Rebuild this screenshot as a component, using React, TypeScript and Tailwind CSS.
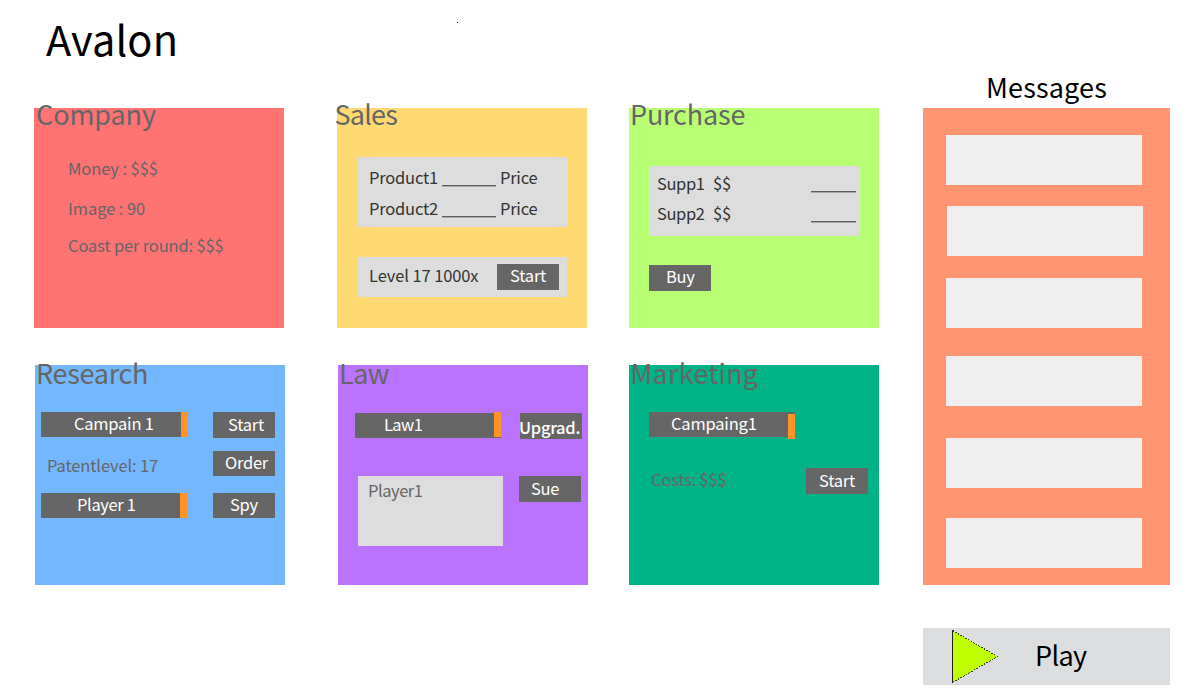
import type { ReactNode } from "react";
import clsx from "clsx";

type BoxProps = { className?: string; children?: ReactNode };

function Panel({ className, children }: BoxProps) {
  return <section className={clsx("flex h-[220px] w-[250px] shrink-0 flex-col items-start", className)}>{children}</section>;
}

function Heading({ className, children }: BoxProps) {
  return <h2 className={clsx("h-8 text-[27px] leading-8 whitespace-nowrap text-[#666666]", className)}>{children}</h2>;
}

function Label({ className, children }: BoxProps) {
  return <span className={clsx("block h-5 shrink-0 whitespace-nowrap", className)}>{children}</span>;
}

function Button({ className, children }: BoxProps) {
  return (
    <button className={clsx("block w-[62px] shrink-0 bg-[#666666] text-left whitespace-nowrap text-white", className)}>
      {children}
    </button>
  );
}

function Picker({ className, thumb, children }: BoxProps & { thumb?: string }) {
  return (
    <div className={clsx("flex h-[25px] shrink-0 justify-between bg-[#666666] text-white", className)}>
      {children}
      <i className={clsx("block h-[25px] w-[7px] bg-[#ff9326]", thumb)} />
    </div>
  );
}

function Blank({ className }: BoxProps) {
  return <i className={clsx("mt-[18px] block h-[2px] border-t border-[#5c5c5c] bg-[#a9a9a9]", className)} />;
}

const messages = ["mt-[27px]", "mt-[21px] ml-px", "mt-[22px]", "mt-[28px]", "mt-[32px]", "mt-[30px]"];

export default function App() {
  return (
    <div className="flex h-[700px] w-[1200px] overflow-hidden bg-white font-['Noto_Sans_CJK_SC',sans-serif] text-[16.5px] leading-5">
      <main className="w-[923px] shrink-0">
        <header className="flex h-[108px] pt-2 pl-[46px]">
          <h1 className="w-[411px] text-[41.5px] leading-[60px] tracking-[0.15px] text-black">Avalon</h1>
          <i className="mt-[14px] block size-px bg-black" />
        </header>

        <div className="flex pl-[34px]">
          <Panel className="bg-[#ff7373] text-[#666666]">
            <Heading className="-mt-[10px] ml-[2px] tracking-[-0.1px]">Company</Heading>
            <Label className="mt-7 ml-[34px] tracking-[-0.08px]">Money : $$$</Label>
            <Label className="mt-5 ml-[34px] tracking-[-0.08px]">Image : 90</Label>
            <Label className="mt-[17px] ml-[34px] tracking-[-0.15px]">Coast per round: $$$</Label>
          </Panel>

          <Panel className="ml-[53px] bg-[#ffda73] text-[#333333]">
            <Heading className="-mt-[10px] -ml-[2.5px] tracking-[-0.8px]">Sales</Heading>
            <div className="mt-[27px] ml-[21px] flex h-[70px] w-[210px] flex-col gap-[11px] bg-[#dddddd] pt-[10px] pl-[10px]">
              {["Product1", "Product2"].map((name) => (
                <div key={name} className="grid h-5 grid-cols-[74px_57px_auto]">
                  <Label className="ml-px tracking-[-0.2px]">{name}</Label>
                  <Blank className="w-[54px]" />
                  <Label className="ml-px tracking-[-0.25px]">Price</Label>
                </div>
              ))}
            </div>
            <div className="mt-[30px] ml-5 flex h-10 w-[210px] bg-[#dddddd] pl-3">
              <Label className="mt-2 w-[128px] tracking-[-0.1px]">Level 17 1000x</Label>
              <Button className="mt-[7px] h-[26px] pb-1 pl-[13px]"><Label className="tracking-[-0.2px]">Start</Label></Button>
            </div>
          </Panel>

          <Panel className="ml-[42px] bg-[#b9ff73] text-[#333333]">
            <Heading className="-mt-[10px] ml-px tracking-[-0.18px]">Purchase</Heading>
            <div className="mt-9 ml-5 flex h-[70px] w-[210px] flex-col gap-[10px] bg-[#dddddd] pt-[7px] pl-2">
              {["Supp1", "Supp2"].map((name) => (
                <div key={name} className="grid h-5 grid-cols-[56px_98px_auto]">
                  <Label className="tracking-[-0.4px]">{name}</Label>
                  <Label className="tracking-[-0.2px]">$$</Label>
                  <Blank className="w-[45px]" />
                </div>
              ))}
            </div>
            <Button className="mt-[29px] ml-5 h-[26px] pb-1 pl-[17px]"><Label className="tracking-[-0.3px]">Buy</Label></Button>
          </Panel>
        </div>

        <div className="mt-[37px] flex pl-[35px]">
          <Panel className="bg-[#73b7ff] text-[#666666]">
            <Heading className="-mt-2 ml-px tracking-[-0.3px]">Research</Heading>
            <div className="mt-[23px] ml-[6px] flex">
              <Picker className="w-[147px] pl-[33px]"><Label className="mt-px tracking-[-0.25px]">Campain 1</Label></Picker>
              <Button className="ml-[25px] h-[26px] pb-1 pl-[15px]"><Label className="mt-px tracking-[-0.25px]">Start</Label></Button>
            </div>
            <div className="mt-[13px] ml-3 flex">
              <Label className="mt-1 w-[166px] tracking-[-0.12px]">Patentlevel: 17</Label>
              <Button className="h-[25px] pb-[3px] pl-3"><Label className="tracking-[-0.27px]">Order</Label></Button>
            </div>
            <div className="mt-[17px] ml-[6px] flex">
              <Picker className="w-[146px] pl-9"><Label className="mt-px tracking-[-0.35px]">Player 1</Label></Picker>
              <Button className="ml-[26px] h-[25px] pb-[3px] pl-[17px]"><Label className="tracking-[-0.3px]">Spy</Label></Button>
            </div>
          </Panel>

          <Panel className="ml-[53px] bg-[#b973ff]">
            <Heading className="-mt-2 ml-px tracking-[-0.5px]">Law</Heading>
            <div className="mt-6 ml-[17px] flex">
              <Picker className="w-[146px] pl-[29px]" thumb="-mt-px"><Label className="mt-px tracking-[-0.6px]">Law1</Label></Picker>
              <Button className="ml-[19px] h-[26px] pb-0 font-medium"><Label className="mt-px -ml-px tracking-[-0.3px]">Upgrad.</Label></Button>
            </div>
            <div className="mt-[37px] ml-5 flex">
              <div className="h-[70px] w-[145px] bg-[#dddddd] pt-1 pl-[10px] text-[#666666]"><Label className="tracking-[-0.45px]">Player1</Label></div>
              <Button className="ml-4 h-[26px] pb-1 pl-3"><Label className="mt-px tracking-[-0.3px]">Sue</Label></Button>
            </div>
          </Panel>

          <Panel className="ml-[41px] bg-[#00b285] text-[#666666]">
            <Heading className="-mt-2 ml-[1.5px] tracking-[0.2px]">Marketing</Heading>
            <Picker className="mt-[23px] ml-5 w-[146px] pl-[22px]" thumb="mt-[2px]"><Label className="mt-px tracking-[-0.2px]">Campaing1</Label></Picker>
            <div className="mt-[31px] ml-[22px] flex">
              <Label className="mt-px w-[155px] tracking-[-0.2px]">Costs: $$$</Label>
              <Button className="h-[26px] pb-1 pl-[13px]"><Label className="mt-px tracking-[-0.25px]">Start</Label></Button>
            </div>
          </Panel>
        </div>
      </main>

      <aside className="flex w-[247px] shrink-0 flex-col">
        <h2 className="mt-[71px] mb-[5px] ml-[63px] h-8 text-[27px] leading-8 tracking-[0.15px] text-black">Messages</h2>
        <div className="flex h-[477px] flex-col bg-[#ff9573] pl-[23px]">
          {messages.map((offset, i) => (
            <div key={i} className={clsx("h-[50px] w-[196px] shrink-0 bg-[#eeeeee]", offset)} />
          ))}
        </div>
        <button className="mt-[43px] flex h-[57px] bg-[#dcddde] pl-[29px] text-left text-[27px] leading-8 tracking-[-0.67px] text-black">
          <svg className="mt-[2px] h-[54px] w-[47px]" viewBox="0 0 47 54" shapeRendering="crispEdges">
            <path d="M0.5 0.5 45.5 26.5 0.5 52.5Z" fill="#bfff00" />
            <path d="M0.5 0.5V52.5" stroke="#222222" />
            <path d="M0.5 0.5 45.5 26.5 0.5 52.5" fill="none" stroke="#334400" strokeDasharray="1.6 1.4" />
          </svg>
          <span className="mt-[11px] ml-9">Play</span>
        </button>
      </aside>
    </div>
  );
}
